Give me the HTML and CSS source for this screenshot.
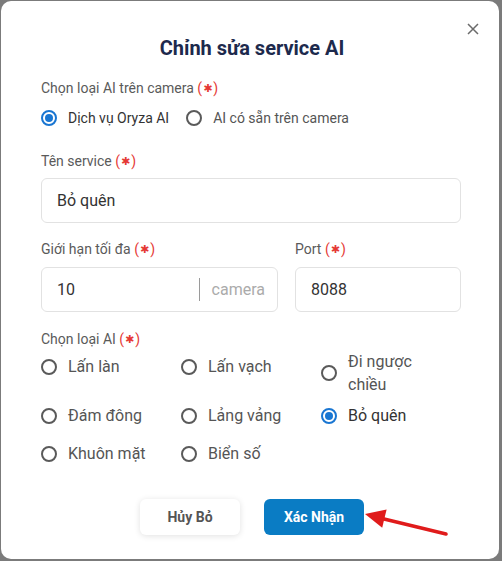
FILE: index.html
```html
<!DOCTYPE html>
<html lang="vi">
<head>
<meta charset="utf-8">
<title>Chỉnh sửa service AI</title>
<link rel="stylesheet" href="styles.css">
</head>
<body>
<div class="modal">
  <button class="close" aria-label="Đóng">
    <svg width="12" height="12" viewBox="0 0 12 12"><path d="M1 1 L11 11 M11 1 L1 11" stroke="#6b6b6b" stroke-width="1.5" fill="none"/></svg>
  </button>
  <h1 class="title">Chỉnh sửa service AI</h1>

  <div class="label">Chọn loại AI trên camera <span class="req">(<span class="star">✱</span>)</span></div>
  <div class="radio-row">
    <label class="radio small checked"><span class="dot"></span><span class="txt">Dịch vụ Oryza AI</span></label>
    <label class="radio small"><span class="dot"></span><span class="txt">AI có sẵn trên camera</span></label>
  </div>

  <div class="label gap-lg">Tên service <span class="req">(<span class="star">✱</span>)</span></div>
  <div class="input"><span class="value">Bỏ quên</span></div>

  <div class="two-col">
    <div class="field wide">
      <div class="label">Giới hạn tối đa <span class="req">(<span class="star">✱</span>)</span></div>
      <div class="input with-suffix"><span class="value">10</span><span class="suffix">camera</span></div>
    </div>
    <div class="field">
      <div class="label">Port <span class="req">(<span class="star">✱</span>)</span></div>
      <div class="input"><span class="value">8088</span></div>
    </div>
  </div>

  <div class="label gap-md">Chọn loại AI <span class="req">(<span class="star">✱</span>)</span></div>
  <div class="grid">
    <label class="radio first-row"><span class="dot"></span><span class="txt">Lấn làn</span></label>
    <label class="radio first-row"><span class="dot"></span><span class="txt">Lấn vạch</span></label>
    <label class="radio wrap"><span class="dot"></span><span class="txt">Đi ngược chiều</span></label>
    <label class="radio"><span class="dot"></span><span class="txt">Đám đông</span></label>
    <label class="radio"><span class="dot"></span><span class="txt">Lảng vảng</span></label>
    <label class="radio checked"><span class="dot"></span><span class="txt">Bỏ quên</span></label>
    <label class="radio"><span class="dot"></span><span class="txt">Khuôn mặt</span></label>
    <label class="radio"><span class="dot"></span><span class="txt">Biển số</span></label>
  </div>

  <div class="actions">
    <button class="btn cancel">Hủy Bỏ</button>
    <button class="btn primary">Xác Nhận</button>
  </div>

  <svg class="arrow" width="90" height="40" viewBox="0 0 90 40">
    <line x1="22" y1="18.5" x2="86" y2="34" stroke="#e01b1b" stroke-width="3.5" stroke-linecap="round"/>
    <polygon points="5,14 26.6,9.6 22.2,27.8" fill="#e01b1b"/>
  </svg>
</div>
</body>
</html>
```

FILE: styles.css
```css
* { box-sizing: border-box; }
html, body { margin: 0; padding: 0; }
body {
  background: #7b7b7b;
  width: 502px;
  height: 561px;
  overflow: hidden;
  font-family: Roboto, "Noto Sans", "Liberation Sans", sans-serif;
}
.modal {
  position: relative;
  margin: 1px 0 0 1px;
  width: 498px;
  height: 558px;
  background: #fff;
  border-radius: 10px;
  padding: 33px 38px 0 40px;
}
.close {
  position: absolute;
  left: 466px;
  top: 22px;
  width: 12px;
  height: 12px;
  padding: 0;
  border: 0;
  background: none;
  display: block;
}
.close svg { display: block; }
.title {
  margin: 0;
  text-align: center;
  font-size: 20px;
  line-height: 28px;
  font-weight: 700;
  color: #1d2a4d;
  padding-left: 2px;
}
.label {
  margin-top: 16px;
  height: 20px;
  font-size: 14px;
  line-height: 20px;
  color: #5a5a5a;
}
.label.gap-lg { margin-top: 21px; }
.req { color: #e53935; }
.star {
  display: inline-block;
  font-size: 11px;
  line-height: 0;
  font-family: "DejaVu Sans", sans-serif;
  vertical-align: 1px;
  padding: 0 1px;
}
.radio-row {
  display: flex;
  gap: 17px;
  margin-top: 8px;
}
.radio {
  display: flex;
  align-items: center;
  gap: 11px;
  font-size: 16px;
  line-height: 24px;
  color: #555;
}
.radio.small { font-size: 14px; }
.dot {
  flex: none;
  width: 16px;
  height: 16px;
  border: 2px solid #5a5a5a;
  border-radius: 50%;
  display: flex;
  align-items: center;
  justify-content: center;
}
.radio.checked .dot { border-color: #1976d2; }
.radio.checked .dot::after {
  content: "";
  width: 8px;
  height: 8px;
  border-radius: 50%;
  background: #1976d2;
}
.radio.checked .txt { color: #333; }
.input {
  margin-top: 7px;
  height: 45px;
  border: 1px solid #e2e2e2;
  border-radius: 6px;
  display: flex;
  align-items: center;
  padding: 0 15px;
  font-size: 16px;
  color: #333;
}
.input .value { flex: 1; }
.with-suffix .suffix {
  color: #ababab;
  border-left: 1px solid #9a9a9a;
  padding-left: 12px;
  line-height: 23px;
  margin-right: -3px;
}
.two-col {
  display: flex;
  gap: 17px;
}
.two-col .field.wide { width: 237px; }
.two-col .field { flex: none; width: 166px; }
.two-col .input { margin-top: 8px; }
.gap-md { margin-top: 17px; }
.grid {
  display: grid;
  grid-template-columns: 140px 140px 140px;
  grid-template-rows: 41px 24px 24px;
  row-gap: 14px;
  align-items: start;
}
.radio.first-row { margin-top: 6px; }
.radio.wrap .txt { max-width: 90px; line-height: 23px; }
.radio.wrap { margin-top: 1px; }
.actions {
  margin-top: 33px;
  display: flex;
  justify-content: center;
  gap: 24px;
  padding-left: 2px;
}
.btn {
  width: 100px;
  height: 36px;
  border: 0;
  border-radius: 6px;
  font-family: Roboto, "Liberation Sans", sans-serif;
  font-size: 14px;
  font-weight: 700;
}
.cancel {
  background: #fff;
  color: #555;
  box-shadow: 0 1px 6px rgba(0, 0, 0, 0.12);
}
.primary {
  background: #0a7cc4;
  color: #fff;
}
.arrow {
  position: absolute;
  left: 359px;
  top: 499px;
}
```
